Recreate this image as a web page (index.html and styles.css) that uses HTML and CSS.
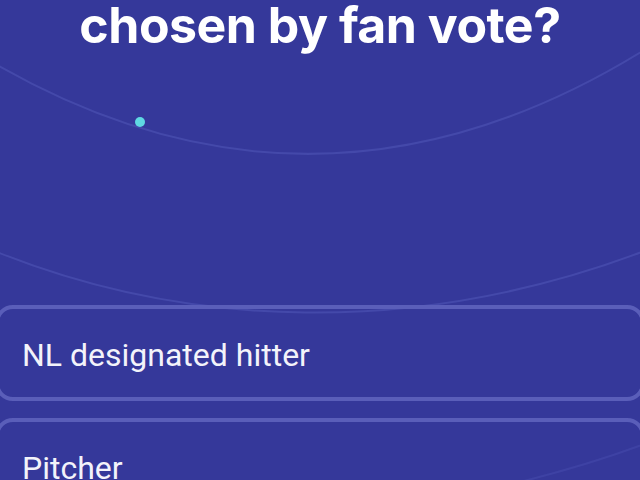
FILE: index.html
```html
<!DOCTYPE html>
<html lang="en">
<head>
<meta charset="utf-8">
<title>Trivia</title>
<link rel="stylesheet" href="styles.css">
</head>
<body>
<main class="screen">
  <svg class="rings" width="640" height="480" viewBox="0 0 640 480" aria-hidden="true">
    <path d="M -20 55 Q 320 260 660 40" />
    <path d="M -20 245 C 180 330, 420 340, 660 245" />
    <path d="M 660 438 Q 600 462 520 482" class="faint" />
  </svg>
  <h1 class="question">chosen by fan vote?</h1>
  <div class="stage">
    <span class="spark"></span>
  </div>
  <ul class="answers">
    <li class="answer">NL designated hitter</li>
    <li class="answer">Pitcher</li>
  </ul>
</main>
</body>
</html>
```

FILE: styles.css
```css
html, body {
  margin: 0;
  padding: 0;
}

body {
  background: #35389a;
  width: 640px;
  height: 480px;
  overflow: hidden;
}

.screen {
  position: relative;
  display: flex;
  flex-direction: column;
  height: 480px;
}

/* decorative rings behind the content */
.rings {
  position: absolute;
  top: 0;
  left: 0;
  z-index: 0;
  fill: none;
  stroke: rgba(150, 160, 255, 0.16);
  stroke-width: 2;
}

.rings .faint {
  stroke: rgba(150, 160, 255, 0.1);
}

.question {
  position: relative;
  z-index: 1;
  flex-shrink: 0;
  margin: -5px 0 0;
  font-family: Inter, "Noto Sans", sans-serif;
  font-weight: 700;
  font-size: 50px;
  line-height: 60px;
  letter-spacing: -0.5px;
  color: #ffffff;
  text-align: center;
}

.stage {
  position: relative;
  flex-shrink: 0;
  height: 250px;
}

.spark {
  position: absolute;
  left: 135px;
  top: 62px;
  width: 10px;
  height: 10px;
  border-radius: 50%;
  background: #5fd8e2;
}

.answers {
  position: relative;
  z-index: 1;
  flex-shrink: 0;
  list-style: none;
  margin: 0 -5px;
  padding: 0;
  display: flex;
  flex-direction: column;
  gap: 17px;
}

.answer {
  box-sizing: border-box;
  flex-shrink: 0;
  height: 96px;
  border: 4px solid #5a5eb9;
  border-radius: 18px;
  padding: 4px 0 0 23px;
  display: flex;
  align-items: center;
  font-family: Roboto, "Liberation Sans", sans-serif;
  font-size: 32px;
  color: #f3f3fa;
}
```
